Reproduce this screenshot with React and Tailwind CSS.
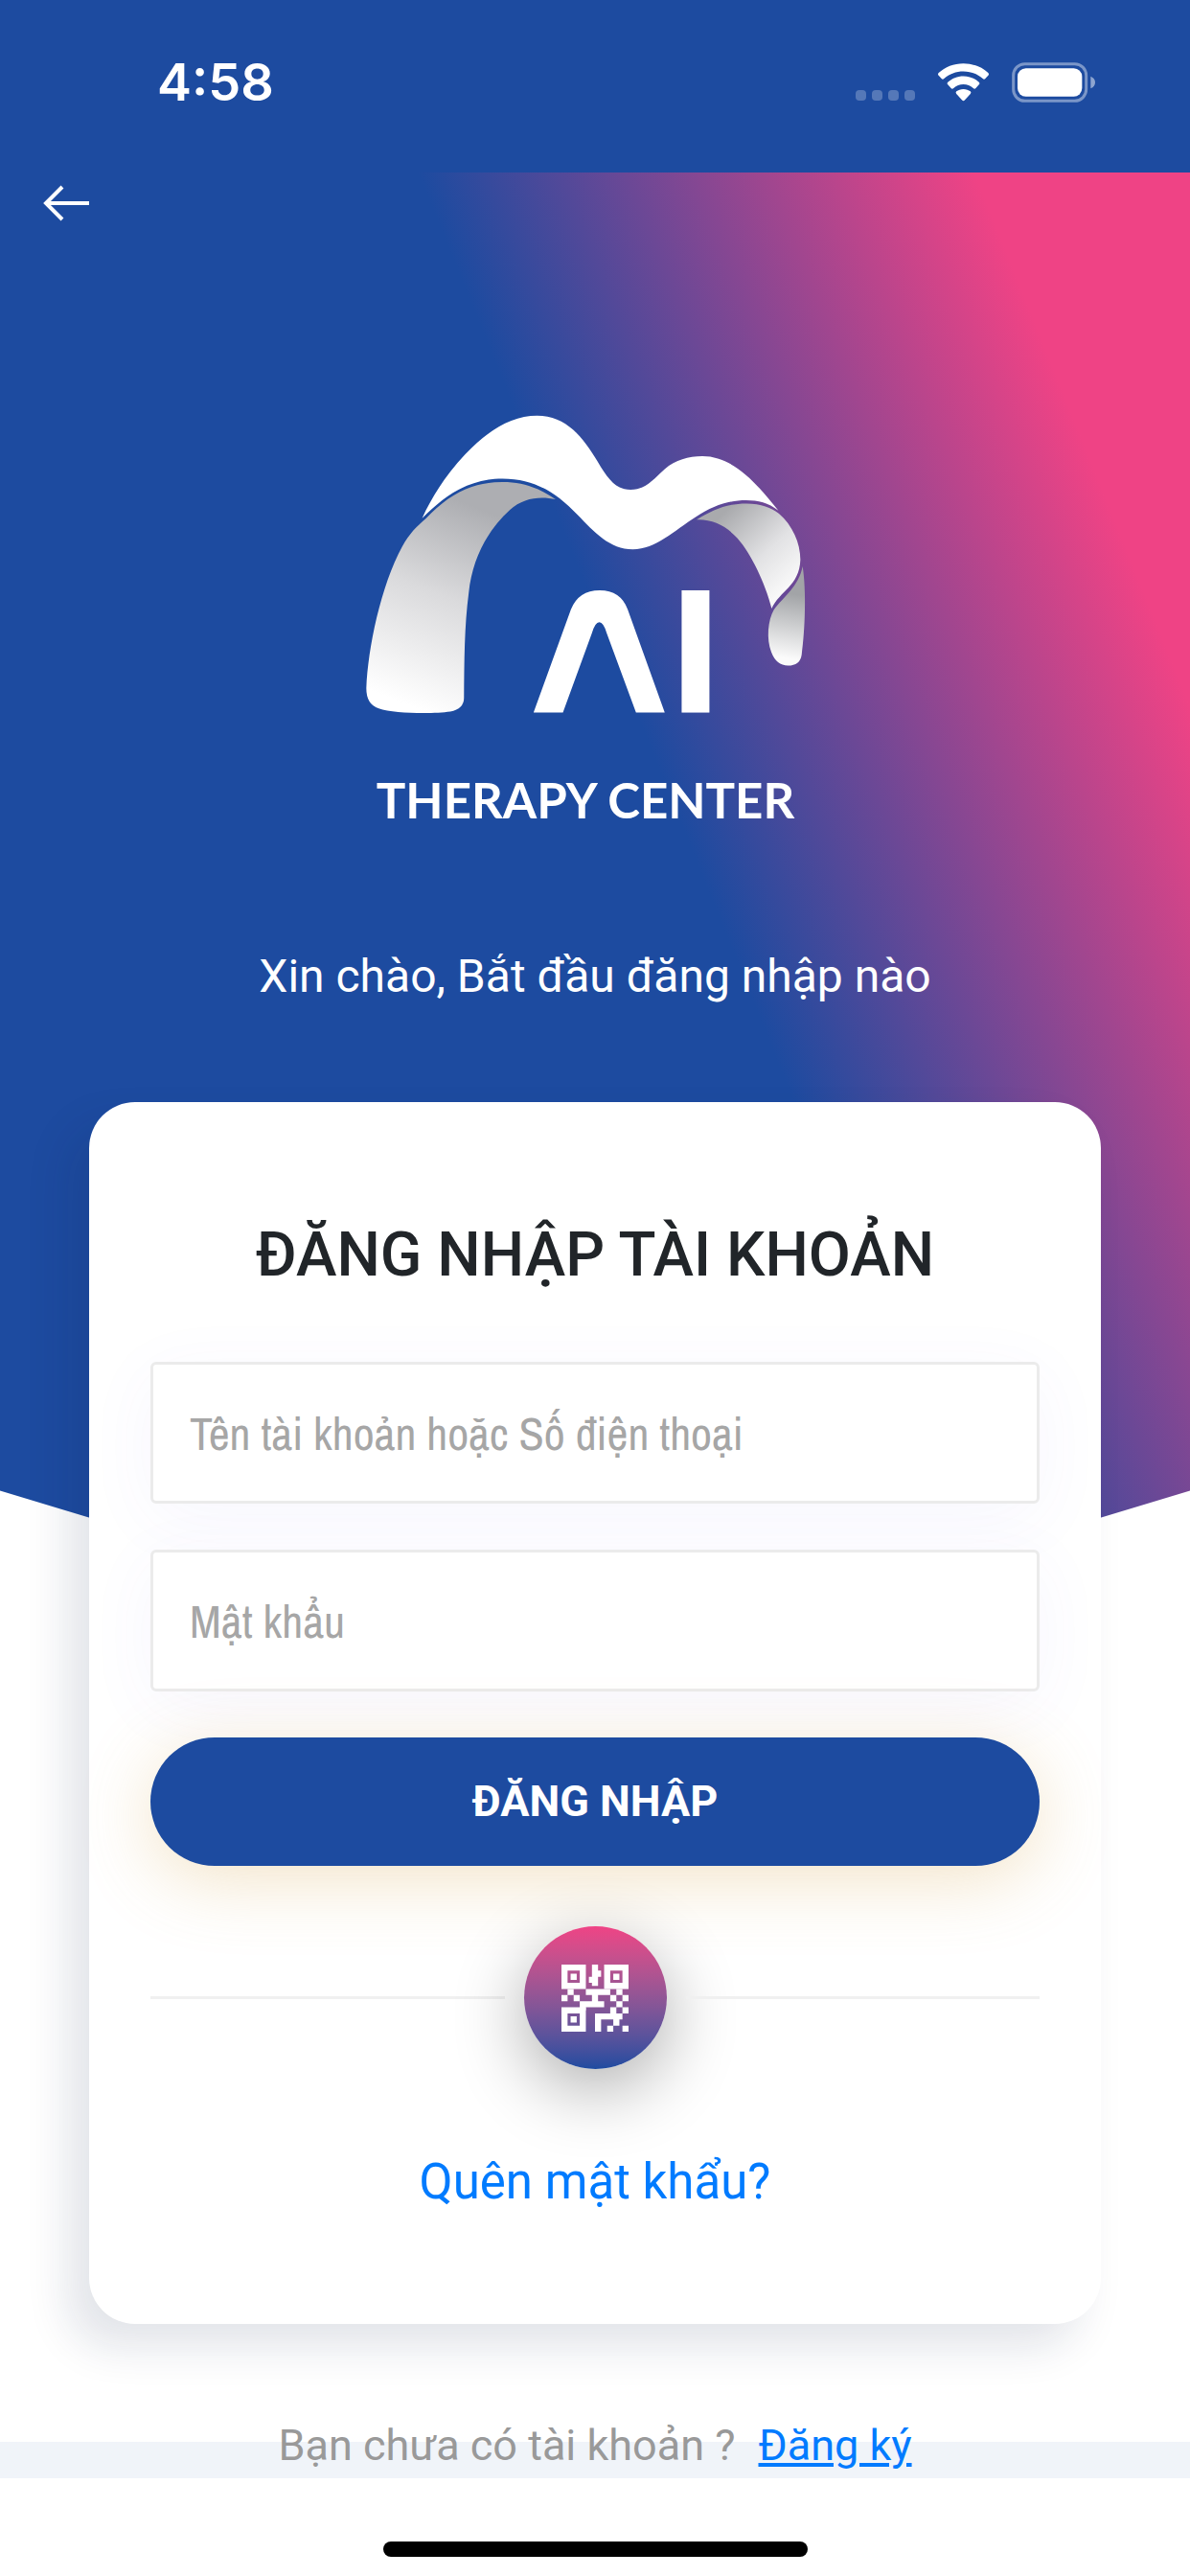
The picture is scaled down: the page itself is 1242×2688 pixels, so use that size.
import React from "react";

function StatusBar() {
  return (
    <header className="flex h-[180px] items-start justify-between bg-[#1d4ba0] pt-[52px] pr-[98px] pl-[164px] text-white">
      <time className="font-[Inter,sans-serif] text-[54px] leading-[68px] font-semibold">4:58</time>
      <div className="mt-[12px] flex h-[44px] items-center gap-6">
        <div className="mt-[27px] flex gap-1.5">
          <span className="size-[11px] rounded-[4px] bg-white/25" />
          <span className="size-[11px] rounded-[4px] bg-white/25" />
          <span className="size-[11px] rounded-[4px] bg-white/25" />
          <span className="size-[11px] rounded-[4px] bg-white/25" />
        </div>
        <svg viewBox="0 0 160 120" className="h-[40px] w-[53px] fill-white" aria-label="Wi-Fi">
          <path d="M80 0C50 0 22 11 2 30Q-2 34 2 38L11 48Q15 52 19 48C36 33 57 25 80 25S124 33 141 48Q145 52 149 48L158 38Q162 34 158 30C138 11 110 0 80 0Z" />
          <path d="M80 40C61 40 44 47 31 59Q27 63 31 67L41 78Q45 82 49 78C58 70 68 66 80 66S102 70 111 78Q115 82 119 78L129 67Q133 63 129 59C116 47 99 40 80 40Z" />
          <path d="M80 81C71 81 64 84 58 88Q54 92 58 96L76 116Q80 120 84 116L102 96Q106 92 102 88C96 84 89 81 80 81Z" />
        </svg>
        <svg viewBox="0 0 264 126" className="h-[42px] w-[88px]" aria-label="Battery">
          <rect x="5" y="5" width="228" height="116" rx="36" fill="none" stroke="#fff" strokeOpacity="0.42" strokeWidth="9" />
          <rect x="18" y="19" width="202" height="88" rx="26" fill="#fff" />
          <path d="M247 44Q261 50 261 63T247 82Z" fill="#fff" fillOpacity="0.5" />
        </svg>
      </div>
    </header>
  );
}

function Logo() {
  return (
    <div className="mx-auto w-[483px]">
      <svg viewBox="58 96 1450 942" className="h-[314px] w-[483px]" role="img" aria-label="MAI">
        <defs>
          <linearGradient id="leg" gradientUnits="userSpaceOnUse" x1="440" y1="400" x2="200" y2="1010">
            <stop offset="0" stopColor="#adaeb2" />
            <stop offset="0.45" stopColor="#dadadc" />
            <stop offset="1" stopColor="#ffffff" />
          </linearGradient>
          <linearGradient id="fold" gradientUnits="userSpaceOnUse" x1="1190" y1="400" x2="1400" y2="620">
            <stop offset="0" stopColor="#a9aaad" />
            <stop offset="0.6" stopColor="#e2e2e4" />
            <stop offset="1" stopColor="#f8f8f8" />
          </linearGradient>
          <linearGradient id="tip" gradientUnits="userSpaceOnUse" x1="1405" y1="660" x2="1375" y2="860">
            <stop offset="0" stopColor="#a2a4a7" />
            <stop offset="1" stopColor="#fbfbfb" />
          </linearGradient>
        </defs>
        <path
          d="M240 422C272 352 315 286 375 222C445 148 520 101 600 101C692 101 745 170 790 245C822 300 848 333 893 333C938 333 964 301 1000 268C1034 240 1074 228 1118 228C1216 228 1290 316 1356 398C1324 374 1293 366 1255 366C1200 366 1151 383 1098 418C1030 461 972 520 900 520C828 520 779 466 727 412C660 341 590 298 492 298C385 298 310 352 240 422Z"
          fill="#fff"
        />
        <path
          d="M252 423C322 350 390 309 492 309C560 309 612 331 658 363C610 352 556 358 515 396C440 465 397 552 386 655C372 760 372 870 371 985Q371 1019 328 1028C270 1036 150 1034 104 1018Q65 1006 65 955C70 830 110 635 178 510C200 470 223 448 252 423Z"
          fill="url(#leg)"
        />
        <path
          d="M1100 427C1150 395 1196 376 1256 376C1302 377 1334 388 1358 408C1400 444 1425 500 1425 552C1422 635 1360 650 1335 705C1314 622 1270 533 1228 485C1192 446 1150 425 1100 427Z"
          fill="url(#fold)"
        />
        <path
          d="M1432 573C1444 650 1440 770 1429 850Q1424 884 1386 884Q1350 884 1334 842C1318 800 1323 742 1342 709C1372 668 1420 636 1432 573Z"
          fill="url(#tip)"
        />
        <path
          d="M589 1031L706 708Q730 648 796 648T884 708L1000 1031H910L818 782Q808 748 795 748T772 782L681 1031Z"
          fill="#fff"
        />
        <rect x="1053" y="648" width="87" height="383" fill="#fff" />
      </svg>
      <p className="mt-[58px] pr-[20px] text-center font-[Lato,sans-serif] text-[51px] leading-[62px] font-bold whitespace-nowrap text-white">
        THERAPY CENTER
      </p>
    </div>
  );
}

function QrIcon() {
  return (
    <svg viewBox="0 0 22 22" className="size-[70px] fill-white" aria-hidden="true">
      <path
        fillRule="evenodd"
        d="M0 0h8v8h-8zM2 2v4h4v-4zM14 0h8v8h-8zM16 2v4h4v-4zM0 14h8v8h-8zM2 16v4h4v-4z"
      />
      <path d="M3 3h2v2h-2zM17 3h2v2h-2zM3 17h2v2h-2z" />
      <path d="M10 0h2v2h1v2h-1v3h-2v-1h-1v-2h1z" />
      <path d="M2 8h2v2h-2zM0 10h2v2h-2zM4 10h2v2h-2z" />
      <path d="M8 8h8v2h-4v2h2v2h-6v1h-2v-3h4v-2h-2z" />
      <path d="M18 8h2v2h-2zM16 10h2v2h-2zM20 10h2v2h-2zM18 12h2v2h-2zM16 14h2v2h-2zM20 14h2v2h-2z" />
      <path d="M11 16h9v2h-1v2h-2v-2h-4v4h-2zM15 20h2v2h-2zM20 20h2v2h-2z" />
    </svg>
  );
}

function Field({ type, label }) {
  return (
    <input
      type={type}
      aria-label={label}
      placeholder={label}
      className="block h-[148px] w-full rounded-[6px] border-[3px] border-[#ebebeb] bg-white px-[38px] font-['Archivo_Narrow','Roboto_Condensed',Roboto,sans-serif] text-[48px] text-[#333] shadow-[0_15px_75px_rgba(90,70,240,0.05)] outline-none placeholder:text-[#a6a6a6]"
    />
  );
}

function LoginCard() {
  return (
    <form
      onSubmit={(e) => e.preventDefault()}
      className="mx-[93px] mt-[96px] flex flex-col rounded-[48px] bg-white px-[64px] pt-[122px] pb-[111px] shadow-[-22px_24px_45px_rgba(15,30,75,0.12)]"
    >
      <h1 className="text-center text-[64px] leading-[76px] font-medium text-[#212529]">ĐĂNG NHẬP TÀI KHOẢN</h1>
      <div className="mt-[73px] flex flex-col gap-12">
        <Field type="text" label="Tên tài khoản hoặc Số điện thoại" />
        <Field type="password" label="Mật khẩu" />
        <button
          type="submit"
          className="h-[134px] rounded-full bg-[#1d4ba0] text-[45px] font-bold text-white shadow-[0_15px_75px_rgba(215,165,75,0.3)]"
        >
          ĐĂNG NHẬP
        </button>
      </div>
      <div className="mt-[63px] flex items-center gap-5">
        <span className="h-[3px] flex-1 bg-[#f0f0f0]" />
        <button
          type="button"
          aria-label="QR"
          className="flex size-[149px] items-center justify-center rounded-full bg-linear-to-b from-[#ef4385] to-[#1d4ba0] shadow-[0_20px_75px_rgba(0,0,0,0.33)]"
        >
          <QrIcon />
        </button>
        <span className="h-[3px] flex-1 bg-[#f0f0f0]" />
      </div>
      <a href="#forgot" className="mt-[80px] self-center text-[51px] leading-[75px] text-[#007bff]">Quên mật khẩu?</a>
    </form>
  );
}

export default function App() {
  return (
    <div className="flex min-h-screen flex-col bg-white font-[Roboto,sans-serif]">
      <StatusBar />
      <main className="grid">
        <div className="col-start-1 row-start-1 h-[1563px] self-start bg-[linear-gradient(68deg,#1d4ba0_57%,#ef4385_88%)] [clip-path:polygon(0_0,100%_0,100%_88%,50%_100%,0_88%)]" />
        <div className="relative col-start-1 row-start-1 flex flex-col">
          <button type="button" aria-label="Back" className="mt-[8px] ml-[44px] flex h-[48px] w-[50px] items-center">
            <svg viewBox="0 0 50 38" className="h-[38px] w-[50px]" fill="none" stroke="#fff" strokeWidth="4">
              <path d="M49 19H4M21 2L4 19L21 36" />
            </svg>
          </button>
          <div className="mt-[196px]">
            <Logo />
          </div>
          <p className="mt-[118px] text-center text-[48px] leading-[70px] text-white">Xin chào, Bắt đầu đăng nhập nào</p>
          <LoginCard />
          <div className="mt-[88px] bg-[linear-gradient(to_bottom,transparent_35px,#f0f4f9_35px)] pt-[5px] text-center text-[45px] leading-[68px] text-[#999]">
            Bạn chưa có tài khoản ?
            <a href="#register" className="ml-[24px] text-[#007bff] underline">Đăng ký</a>
          </div>
        </div>
      </main>
      <div className="mx-auto mt-[66px] h-[16px] w-[443px] rounded-full bg-black" />
    </div>
  );
}
